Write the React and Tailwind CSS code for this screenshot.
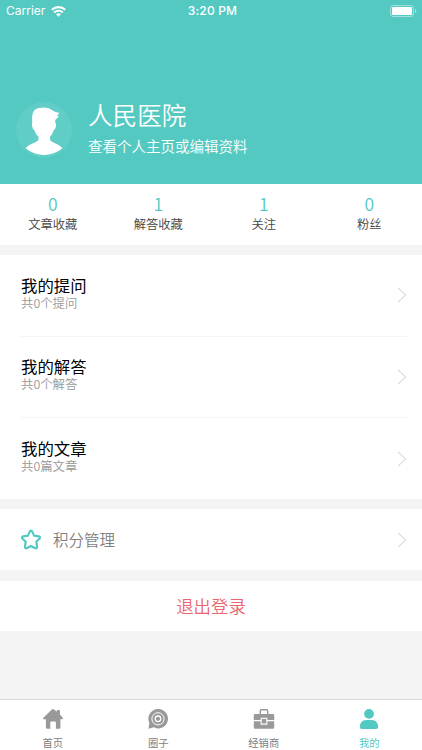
import React from "react";

const stats = [
  { value: 0, label: "文章收藏" },
  { value: 1, label: "解答收藏" },
  { value: 1, label: "关注" },
  { value: 0, label: "粉丝" },
];

const records = [
  { title: "我的提问", desc: "共0个提问" },
  { title: "我的解答", desc: "共0个解答" },
  { title: "我的文章", desc: "共0篇文章" },
];

const ChevronIcon = () => (
  <svg className="w-[10px] h-[16px] shrink-0" viewBox="0 0 10 16" fill="none" stroke="#c9c9c9" strokeWidth="1">
    <path d="M1 .8 8.700 8 1 15.2" />
  </svg>
);

const WifiIcon = () => (
  <svg className="w-[15px] h-[11px]" viewBox="0 0 15 11" fill="none" stroke="#fff" strokeWidth="2.1">
    <path d="M.9 3.800a9.5 9.5 0 0 1 13.2 0" />
    <path d="M3.2 6.500a6.2 6.2 0 0 1 8.6 0" />
    <path d="M7.5 10.8 5.1 8.400a3.400 3.400 0 0 1 4.800 0z" fill="#fff" stroke="none" />
  </svg>
);

const BatteryIcon = () => (
  <svg className="w-[27px] h-[12px]" viewBox="0 0 27 12">
    <rect x=".5" y=".5" width="23" height="11" rx="2.8" fill="none" stroke="#fff" strokeOpacity=".45" />
    <rect x="2" y="2" width="20" height="8" rx="1.2" fill="#fff" />
    <path d="M25 4v4c.8-.3 1.4-1.1 1.4-2S25.800 4.300 25 4z" fill="#fff" fillOpacity=".5" />
  </svg>
);

const AvatarIcon = () => (
  <svg className="w-14 h-14 shrink-0" viewBox="0 0 56 56">
    <circle cx="28" cy="28" r="28" fill="#60cdc6" />
    <path
      d="M16.300 20C15.500 13 17 7.500 22 6.300c6-1.500 10.500-1 14 1.700 2 1.600 4 2.500 7.300 2.600-.6 1.600-1.600 2.500-2.700 3 .8.300 1.600.2 2.300 0-.8 2-2 3.300-3.600 4.200L39.200 21c1.400.4 1 2.600.5 4.300-.5 1.700-1.200 2.700-2.100 2.900-.8 2.600-2 4.900-3.600 6.600v2.700c1 3.500 8.500 3.500 12.300 8.700A28 28 0 0 1 9.700 46.200c3.800-5.200 11.800-5.200 12.800-8.700v-2.700c-1.900-1.700-3.200-4-4-6.600-.9-.2-1.700-1.200-2.100-2.900-.5-2-.6-3.900-.1-5.300z"
      fill="#fff"
    />
  </svg>
);

const StarIcon = () => (
  <svg className="w-[22px] h-[22px]" viewBox="0 0 22 22" fill="none" stroke="#54c9c2" strokeWidth="2.200" strokeLinejoin="round">
    <path d="M9.900 2.400q1.100-1.700 2.200 0l2 4.200 4.700.7q1.900.5.800 2.100l-3.300 3.400.8 4.900q0 2-1.900 1.500L11 17l-4.200 2.200q-1.900.5-1.900-1.500l.8-4.900-3.300-3.400q-1.100-1.600.8-2.100l4.700-.7z" />
  </svg>
);

const HomeIcon = () => (
  <svg className="w-5 h-5" viewBox="0 0 20 20" fill="#999">
    <path d="M8.900.5q1.100-.9 2.200 0l2.700 2.300V1.600q0-.7.700-.7h1.700q.7 0 .7.700v3.900l2.800 3.300q.8 1.300-.6 1.500h-1.700v8.200q0 1.300-1.300 1.300h-3.200v-6.300q0-1-1-1H8.300q-1 0-1 1v6.300H4.200q-1.300 0-1.300-1.300v-8.200H.9Q-.5 10.100.4 8.800z" />
  </svg>
);

const CircleIcon = () => (
  <svg className="w-5 h-5" viewBox="0 0 20 20">
    <path d="M10.300 0a9.700 9.700 0 1 1-4.500 18.300L.4 19.700l1-5.600A9.700 9.700 0 0 1 10.300 0z" fill="#999" />
    <g fill="none" stroke="#fff" strokeWidth="1">
      <circle cx="10" cy="9.800" r="6.100" />
      <circle cx="10" cy="9.800" r="2.800" strokeWidth="1.300" />
    </g>
  </svg>
);

const DealerIcon = () => (
  <svg className="w-[22px] h-5" viewBox="0 0 22 20">
    <path d="M7.300 5V1.700q0-1 1-1h5.400q1 0 1 1V5" fill="none" stroke="#999" strokeWidth="1.400" />
    <path d="M2 5h18q1.200 0 1.200 1.200v4.900H14.400V8.800H7.600v2.300H.8V6.200Q.8 5 2 5z" fill="#999" />
    <path d="M.8 12.300h6.800v3.400h6.800v-3.400h6.800v6.200q0 1.300-1.200 1.300H2q-1.200 0-1.200-1.300z" fill="#999" />
    <rect x="8.700" y="9.900" width="4.600" height="4.600" fill="#999" />
  </svg>
);

const MineIcon = () => (
  <svg className="w-5 h-5" viewBox="0 0 20 20" fill="#54c9c2">
    <circle cx="10" cy="4.900" r="4.900" />
    <path d="M.8 17.900c0-4.200 2.700-7 6.300-7h5.800c3.600 0 6.300 2.800 6.300 7q0 2-2 2H2.800q-2 0-2-2z" />
  </svg>
);

const tabs = [
  { label: "首页", Icon: HomeIcon },
  { label: "圈子", Icon: CircleIcon },
  { label: "经销商", Icon: DealerIcon },
  { label: "我的", Icon: MineIcon, active: true },
];

const StatusBar = () => (
  <div className="grid grid-cols-3 items-center h-[22px] pl-[6px] pr-[5px] font-['Inter','Noto_Sans_CJK_SC',sans-serif] font-normal text-[12px] leading-[22px]">
    <div className="flex items-center gap-[6px]">
      <span>Carrier</span>
      <WifiIcon />
    </div>
    <div className="text-center font-medium pl-[2px] tracking-[0.2px]">3:20 PM</div>
    <div className="flex justify-end">
      <BatteryIcon />
    </div>
  </div>
);

const App = () => {
  return (
    <div className="flex flex-col w-[422px] h-[750px] overflow-hidden bg-[#f4f4f4] font-['Noto_Sans_CJK_SC',sans-serif] font-[350]">
      <header className="h-[184px] shrink-0 bg-[#54c9c2] text-white">
        <StatusBar />
        <div className="flex pt-[80px] pl-4">
          <AvatarIcon />
          <div className="pl-4">
            <div className="text-[24.600px] leading-[30px] -mt-[3px]">人民医院</div>
            <div className="text-[14.500px] leading-5 mt-[7px]">查看个人主页或编辑资料</div>
          </div>
        </div>
      </header>

      <section className="grid grid-cols-4 h-[61px] shrink-0 pt-[9px] bg-white text-center">
        {stats.map((item) => (
          <div key={item.label}>
            <div className="text-[17.500px] leading-[22px] text-[#54c9c2]">{item.value}</div>
            <div className="text-[12.300px] leading-[18px] text-[#444]">{item.label}</div>
          </div>
        ))}
      </section>

      <section className="mt-[10px] h-[244px] shrink-0 bg-white pl-[21px] pr-[15px]">
        {records.map((item, i) => (
          <div
            key={item.title}
            className={`flex items-center justify-between ${i < 2 ? "h-[81.500px] border-b border-[#f4f4f4]" : "h-[81px]"}`}
          >
            <div className="-mt-[5px]">
              <div className="text-[16.400px] leading-5 font-normal text-black">{item.title}</div>
              <div className="text-[12.400px] leading-4 text-[#999]">{item.desc}</div>
            </div>
            <ChevronIcon />
          </div>
        ))}
      </section>

      <section className="flex items-center mt-[10px] h-[61px] shrink-0 bg-white pl-5 pr-[15px]">
        <StarIcon />
        <span className="flex-1 pl-[11px] text-[15.500px] text-[#808080]">积分管理</span>
        <ChevronIcon />
      </section>

      <button className="mt-[11px] h-[50px] shrink-0 bg-white text-[17.400px] text-[#ea6570]">退出登录</button>

      <nav className="grid grid-cols-4 mt-auto h-[51px] shrink-0 border-t border-[#d9d9d9] bg-white">
        {tabs.map(({ label, Icon, active }) => (
          <div key={label} className="flex flex-col items-center pt-[9px]">
            <Icon />
            <span
              className={`mt-[6px] text-[10.300px] leading-[15px] font-normal ${active ? "text-[#54c9c2]" : "text-[#808080]"}`}
            >
              {label}
            </span>
          </div>
        ))}
      </nav>
    </div>
  );
};

export default App;
